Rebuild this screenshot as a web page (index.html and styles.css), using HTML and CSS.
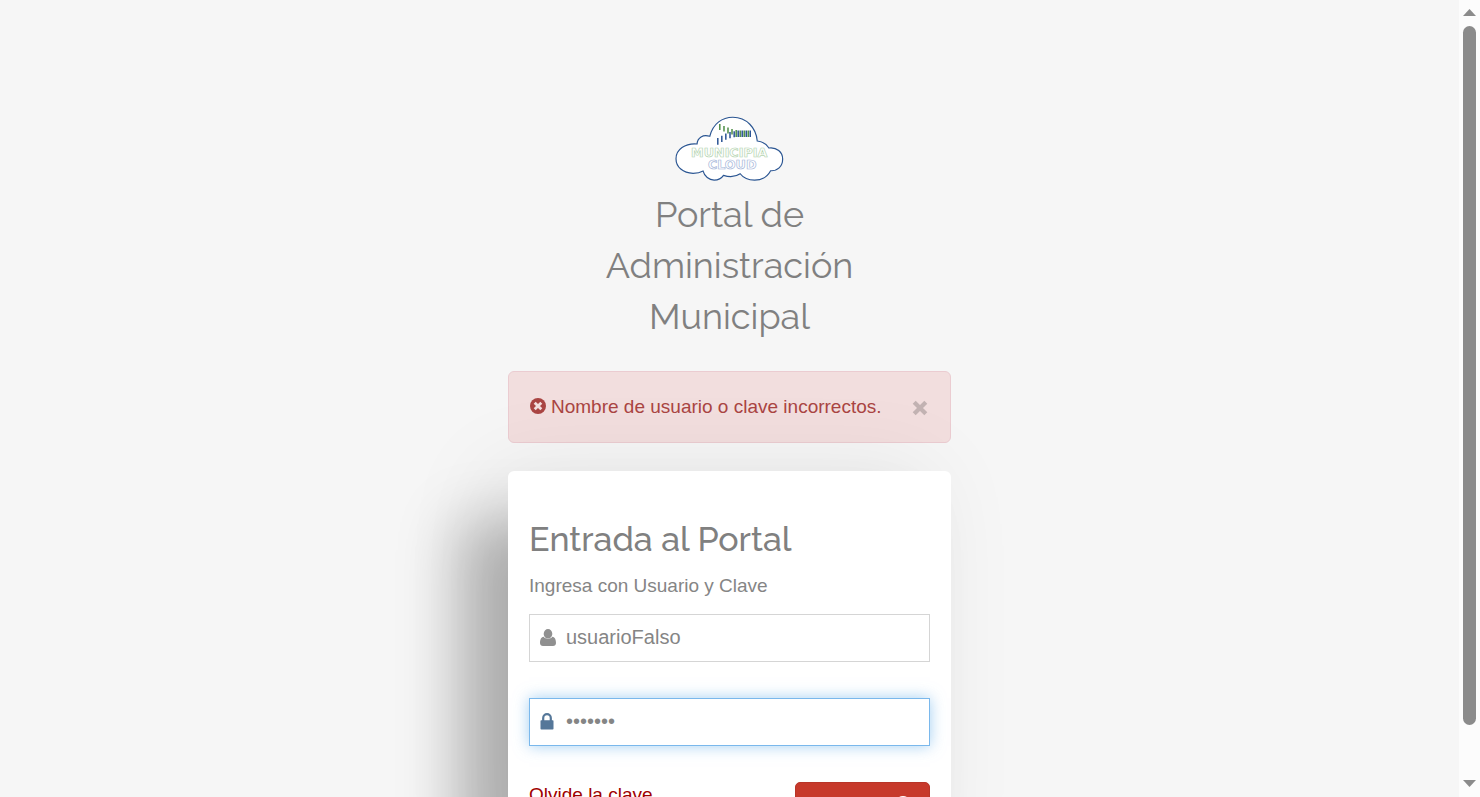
FILE: index.html
```html
<!DOCTYPE html>
<html lang="es">
<head>
<meta charset="utf-8">
<meta name="viewport" content="width=device-width, initial-scale=1">
<title>Portal de Administración Municipal</title>
<link rel="stylesheet" href="styles.css">
</head>
<body>
<main class="page">
  <div class="column">
    <header class="brand">
      <svg class="logo" viewBox="46 34 326 196" aria-hidden="true">
        <path d="M150 94C160 55 188 37 219 37C260 37 289 69 292 108C308 110 320 118 327 129C350 126 368 141 368 162C368 185 352 198 332 197C323 214 306 225 284 225C266 225 250 218 241 206C225 217 207 216 191 211C185 220 175 225 163 225C148 225 134 213 130 198C120 204 110 205 100 205C70 204 49 186 49 161C49 134 76 114 112 117C113 98 130 87 150 94Z" fill="#fff" stroke="#2a5592" stroke-width="3.5"/>
        <path d="M180 57v18M192.500 63v17M204.500 68v18M216.500 72v17M229 75v21M241 77v19M253 77v19M265 77v19" stroke="#4d8d45" stroke-width="4.500"/>
        <path d="M174 99v20M186 92v19M198 86v18M210.500 81v19M223 79v18M235 77v19M247 77v19M259 77v19M271 77v19" stroke="#2b5495" stroke-width="4.500"/>
        <text class="logo-text logo-text-green" x="208" y="157" text-anchor="middle">MUNICIPIA</text>
        <text class="logo-text logo-text-blue" x="217" y="191" text-anchor="middle">CLOUD</text>
      </svg>
      <h1 class="title">Portal de Administración Municipal</h1>
    </header>

    <div class="alert" role="alert">
      <svg class="alert-icon" viewBox="0 0 16 16" aria-hidden="true"><circle cx="8" cy="8" r="8" fill="#a94442"/><path d="M4.700 4.700l6.600 6.600M11.300 4.700l-6.600 6.600" stroke="#f2dede" stroke-width="2.800"/></svg>
      <span class="alert-text">Nombre de usuario o clave incorrectos.</span>
      <button class="close" type="button" aria-label="Cerrar"><svg viewBox="0 0 16 16"><path d="M2.200 2.200l11.600 11.600M13.800 2.200l-11.600 11.600" stroke="currentColor" stroke-width="4.200"/></svg></button>
    </div>

    <form class="card">
      <h2 class="card-title">Entrada al Portal</h2>
      <label class="hint" for="user">Ingresa con Usuario y Clave</label>
      <div class="field">
        <svg class="field-icon" viewBox="0 0 16 17" aria-hidden="true"><path d="M8 0a4.300 4.700 0 0 1 4.300 4.700C12.300 7.300 10.500 9.500 8 9.500S3.700 7.300 3.700 4.700A4.300 4.700 0 0 1 8 0ZM3.600 7.800C1 8.100 0 11 0 14c0 2 1.300 3 3 3h10c1.700 0 3-1 3-3 0-3-1-5.900-3.600-6.200C11.300 9.300 9.800 9.900 8 9.900S4.700 9.300 3.600 7.800Z" fill="currentColor"/></svg>
        <input class="input" id="user" type="text" value="usuarioFalso">
      </div>
      <div class="field field-active">
        <svg class="field-icon" viewBox="0 0 16 17" aria-hidden="true"><path d="M3.200 8V5a3.800 3.800 0 0 1 7.600 0V8" fill="none" stroke="currentColor" stroke-width="2.200"/><rect x="0.500" y="7.300" width="13" height="9.200" rx="0.800" fill="currentColor"/></svg>
        <input class="input" id="pass" type="password" value="1234567" aria-label="Clave">
      </div>
      <div class="actions">
        <a class="forgot" href="#">Olvide la clave</a>
        <button class="submit" type="submit" aria-label="Entrar"><svg viewBox="0 0 18 18" aria-hidden="true"><circle cx="9" cy="9" r="8" fill="#fff"/></svg></button>
      </div>
    </form>
  </div>
</main>
<div class="scrollbar" aria-hidden="true">
  <svg class="arrow" viewBox="0 0 13 7"><path d="M0 7L6.500 0L13 7Z" fill="#8b8b8b"/></svg>
  <div class="track"><div class="thumb"></div></div>
  <svg class="arrow" viewBox="0 0 13 7"><path d="M0 0H13L6.500 7Z" fill="#8b8b8b"/></svg>
</div>
</body>
</html>
```
FILE: styles.css
```css
* { box-sizing: border-box; }

body {
  margin: 0;
  display: flex;
  height: 100vh;
  overflow: hidden;
  background: #f6f6f6;
  color: #858585;
  font: 19px/27px "Liberation Sans", Arial, sans-serif;
}

.page {
  flex: 1;
  min-width: 0;
  overflow: hidden;
  padding: 116px 16px 0;
}

.column {
  max-width: 443px;
  margin: 0 auto;
}

.brand {
  display: flex;
  flex-direction: column;
  align-items: center;
  margin-bottom: 29px;
}

.logo { width: 109px; height: 66px; }

.logo-text {
  font: bold 38px "DejaVu Sans", sans-serif;
  fill: #fff;
  stroke-width: 2;
}
.logo-text-green { stroke: #b4d4b0; }
.logo-text-blue { stroke: #a3b4d8; }

.title {
  max-width: 260px;
  margin: 7px 0 0;
  text-align: center;
  font: 400 36px/51px Raleway, Lato, sans-serif;
  color: #808080;
}

.alert {
  display: flex;
  align-items: center;
  gap: 5px;
  height: 72px;
  margin-bottom: 28px;
  padding: 0 21px 2px;
  border: 1px solid #ebccd1;
  border-radius: 6px;
  background: #f2dede;
  color: #a94442;
}
.alert-icon { width: 16px; height: 16px; }
.alert-text { flex: 1; }

.close {
  width: 18px;
  height: 18px;
  margin-top: 4px;
  padding: 1px;
  border: 0;
  background: none;
  color: #c2b2b2;
}
.close svg { display: block; }

.card {
  padding: 43px 21px 40px;
  border-radius: 6px;
  background: #fff;
  box-shadow: -50px 50px 60px rgba(0, 0, 0, 0.26), -20px 0 90px rgba(0, 0, 0, 0.08);
}

.card-title {
  margin: 0 0 7px;
  font: 500 34px/51px Raleway, Lato, sans-serif;
  color: #808080;
}

.hint { display: block; margin-bottom: 15px; }

.field {
  display: flex;
  align-items: center;
  gap: 10px;
  height: 48px;
  margin-bottom: 36px;
  padding: 0 10px 2px;
  border: 1px solid #d5d5d5;
  color: #909090;
}
.field-active {
  border-color: #7ab8ec;
  box-shadow: 0 0 14px rgba(102, 175, 233, 0.6);
  color: #557799;
}
.field-icon { width: 16px; height: 17px; }

.input {
  flex: 1;
  min-width: 0;
  padding: 0;
  border: 0;
  outline: 0;
  background: none;
  color: #858585;
  font: 20px/27px "Liberation Sans", Arial, sans-serif;
}

.actions {
  display: flex;
  justify-content: space-between;
  align-items: flex-start;
}
.forgot {
  color: #a00000;
  line-height: 25px;
  text-decoration: none;
}

.submit {
  width: 135px;
  height: 47px;
  padding: 0 17px;
  border: 1px solid #b83529;
  border-radius: 5px;
  background: #c7392b;
  text-align: right;
}
.submit svg { width: 18px; height: 18px; }

.scrollbar {
  display: flex;
  flex-direction: column;
  align-items: center;
  width: 21px;
  padding: 9px 0 10px;
  background: #fcfcfc;
}
.arrow { width: 13px; height: 7px; }
.track { flex: 1; padding: 10px 0; }
.thumb {
  width: 13px;
  height: 94%;
  border-radius: 7px;
  background: #8b8b8b;
}
```
